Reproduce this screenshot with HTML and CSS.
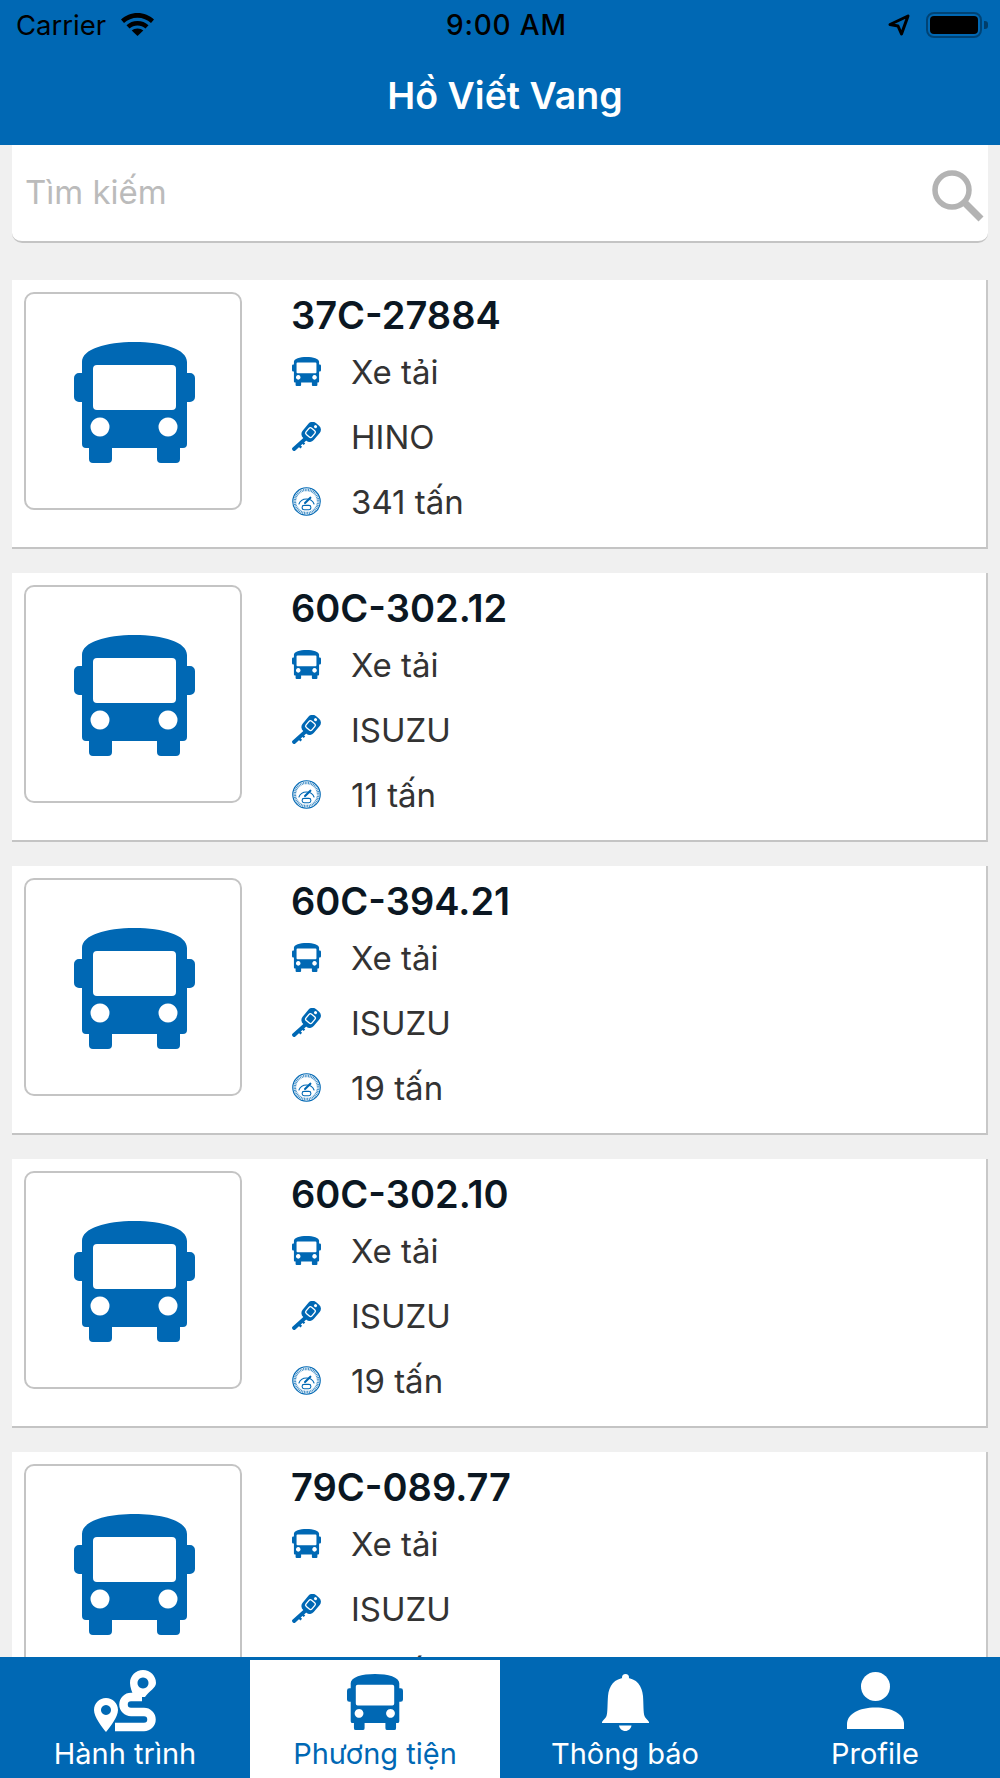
FILE: index.html
```html
<!DOCTYPE html>
<html lang="vi">
<head>
<meta charset="utf-8">
<title>Hồ Viết Vang</title>
<link rel="stylesheet" href="styles.css">
</head>
<body>
<svg class="defs" width="0" height="0" aria-hidden="true">
  <symbol id="bus" viewBox="0 0 121 121">
    <path fill-rule="evenodd" d="M8 20C8 7 32 0 60.500 0S113 7 113 20V31h3a5 5 0 0 1 5 5V55a5 5 0 0 1-5 5h-3v42a4 4 0 0 1-4 4h-3v11a4 4 0 0 1-4 4H87a4 4 0 0 1-4-4V106H38v11a4 4 0 0 1-4 4H19a4 4 0 0 1-4-4V106h-3a4 4 0 0 1-4-4V60H5a5 5 0 0 1-5-5V36a5 5 0 0 1 5-5H8ZM23 23a4 4 0 0 0-4 4V64a4 4 0 0 0 4 4H98a4 4 0 0 0 4-4V27a4 4 0 0 0-4-4ZM26 75.500a9.500 9.500 0 1 0 .01 0ZM94 75.500a9.500 9.500 0 1 0 .01 0Z"/>
  </symbol>
  <symbol id="key" viewBox="0 0 28 28">
    <path d="M2 26 12.500 16.500" fill="none" stroke="currentColor" stroke-width="3.800" stroke-linecap="round"/>
    <path d="M6.500 22.500l2.500 2.200M10 19.500l2 2" fill="none" stroke="currentColor" stroke-width="2.200"/>
    <g transform="rotate(40 18.500 9.500)">
      <rect x="11.500" y="0" width="14" height="19" rx="5"/>
      <rect x="14.800" y="6.500" width="7.400" height="8" rx="1.800" fill="none" stroke="#fff" stroke-width="1.300"/>
      <circle cx="18.500" cy="3" r="1.500" fill="#fff"/>
    </g>
  </symbol>
  <symbol id="gauge" viewBox="0 0 30 30">
    <circle cx="15" cy="15" r="14.200" fill="none" stroke="currentColor" stroke-width="1.200"/>
    <circle cx="15" cy="15" r="12" fill="none" stroke="currentColor" stroke-width="2.600" stroke-dasharray="1 .7" opacity=".75"/>
    <path d="M7 18A8.500 8.500 0 0 1 23 18" fill="none" stroke="currentColor" stroke-width="1.200"/>
    <path d="M13.500 16.500 19 11" fill="none" stroke="currentColor" stroke-width="2.200" stroke-linecap="round"/>
    <rect x="10.500" y="19" width="9" height="4.500" rx="2" fill="none" stroke="currentColor" stroke-width="1.100"/>
  </symbol>
</svg>

<header class="topbar">
  <div class="status">
    <span class="carrier">Carrier</span>
    <svg class="wifi" viewBox="0 0 33 23"><path d="M16.500 0C10 0 4.500 2.500 0 6.500L3 10c3.700-3.200 8.300-5.200 13.500-5.200S26.300 6.800 30 10l3-3.500C28.500 2.500 23 0 16.500 0Z"/><path d="M16.500 8c-4.300 0-8 1.600-11 4.200l3 3.400c2.200-1.900 5-3 8-3s5.800 1.100 8 3l3-3.400c-3-2.600-6.700-4.200-11-4.200Z"/><path d="M16.500 15.500c-2.400 0-4.300.8-5.800 2.100l5.800 5.400 5.800-5.400c-1.500-1.300-3.400-2.100-5.800-2.100Z"/></svg>
    <span class="time">9:00 AM</span>
    <svg class="locate" viewBox="0 0 22 22"><path d="M20 2 2 10.500 10 12 13.500 20Z" fill="none" stroke="#000" stroke-width="3" stroke-linejoin="round"/></svg>
    <div class="battery"><div class="battery-level"></div></div>
    <div class="battery-nub"></div>
  </div>
  <h1 class="title">Hồ Viết Vang</h1>
</header>

<div class="search">
  <span class="placeholder">Tìm kiếm</span>
  <svg class="search-icon" viewBox="0 0 52 52"><circle cx="20" cy="20" r="17" fill="none" stroke="#b3b3b3" stroke-width="5.500"/><path d="M32 32 49 49" stroke="#b3b3b3" stroke-width="7"/></svg>
</div>

<main class="list">
  <article class="card">
    <div class="thumb"><svg class="thumb-bus"><use href="#bus"/></svg></div>
    <div class="info">
      <h2 class="plate">37C-27884</h2>
      <div class="row"><svg class="ico"><use href="#bus"/></svg><span>Xe tải</span></div>
      <div class="row"><svg class="ico"><use href="#key"/></svg><span>HINO</span></div>
      <div class="row"><svg class="ico"><use href="#gauge"/></svg><span>341 tấn</span></div>
    </div>
  </article>
  <article class="card">
    <div class="thumb"><svg class="thumb-bus"><use href="#bus"/></svg></div>
    <div class="info">
      <h2 class="plate">60C-302.12</h2>
      <div class="row"><svg class="ico"><use href="#bus"/></svg><span>Xe tải</span></div>
      <div class="row"><svg class="ico"><use href="#key"/></svg><span>ISUZU</span></div>
      <div class="row"><svg class="ico"><use href="#gauge"/></svg><span>11 tấn</span></div>
    </div>
  </article>
  <article class="card">
    <div class="thumb"><svg class="thumb-bus"><use href="#bus"/></svg></div>
    <div class="info">
      <h2 class="plate">60C-394.21</h2>
      <div class="row"><svg class="ico"><use href="#bus"/></svg><span>Xe tải</span></div>
      <div class="row"><svg class="ico"><use href="#key"/></svg><span>ISUZU</span></div>
      <div class="row"><svg class="ico"><use href="#gauge"/></svg><span>19 tấn</span></div>
    </div>
  </article>
  <article class="card">
    <div class="thumb"><svg class="thumb-bus"><use href="#bus"/></svg></div>
    <div class="info">
      <h2 class="plate">60C-302.10</h2>
      <div class="row"><svg class="ico"><use href="#bus"/></svg><span>Xe tải</span></div>
      <div class="row"><svg class="ico"><use href="#key"/></svg><span>ISUZU</span></div>
      <div class="row"><svg class="ico"><use href="#gauge"/></svg><span>19 tấn</span></div>
    </div>
  </article>
  <article class="card">
    <div class="thumb"><svg class="thumb-bus"><use href="#bus"/></svg></div>
    <div class="info">
      <h2 class="plate">79C-089.77</h2>
      <div class="row"><svg class="ico"><use href="#bus"/></svg><span>Xe tải</span></div>
      <div class="row"><svg class="ico"><use href="#key"/></svg><span>ISUZU</span></div>
      <div class="row"><svg class="ico"><use href="#gauge"/></svg><span>19 tấn</span></div>
    </div>
  </article>
</main>

<nav class="tabs">
  <div class="tab">
    <svg class="tab-icon route" viewBox="0 0 62 62"><path fill-rule="evenodd" d="M12 28C5.400 28 0 33.400 0 40c0 7 8 17 12 22 4-5 12-15 12-22 0-6.600-5.400-12-12-12ZM12 35a5 5 0 1 1-.01 0Z"/><path fill-rule="evenodd" d="M49 0C41.800 0 36 5.800 36 13c0 4 2 9 4 14h11c4-6 11-9 11-14C62 5.800 56.200 0 49 0ZM49 7.500a5.500 5.500 0 1 1-.01 0Z"/><path d="M48 27H37a7.500 7.500 0 0 0 0 15H50a7.500 7.500 0 0 1 0 15H21" fill="none" stroke="#fff" stroke-width="8.500"/></svg>
    <span class="tab-label">Hành trình</span>
  </div>
  <div class="tab active">
    <svg class="tab-icon"><use href="#bus"/></svg>
    <span class="tab-label">Phương tiện</span>
  </div>
  <div class="tab">
    <svg class="tab-icon bell" viewBox="0 0 47 57"><circle cx="23.500" cy="3.500" r="3.500"/><path d="M23.500 4C12 4 7 12 6 22c-.6 8-.3 17-1.500 20C4 44 1 46 0 48v1h47v-1c-1-2-4-4-4.500-6C41.300 39 41.600 30 41 22 40 12 35 4 23.500 4Z"/><path d="M17 51.500h12.500c-.5 3-3 5.500-6.250 5.500S17.500 54.500 17 51.500Z"/></svg>
    <span class="tab-label">Thông báo</span>
  </div>
  <div class="tab">
    <svg class="tab-icon person" viewBox="0 0 57 57"><circle cx="28.500" cy="14.500" r="14.500"/><path d="M0 57V52C0 42 12 35.500 28.500 35.500S57 42 57 52V57Z"/></svg>
    <span class="tab-label">Profile</span>
  </div>
</nav>
</body>
</html>
```

FILE: styles.css
```css
* { box-sizing: border-box; }
html, body { margin: 0; padding: 0; }
body {
  position: relative;
  width: 1000px;
  height: 1778px;
  overflow: hidden;
  background: #f0f0f0;
  font-family: Inter, "Liberation Sans", sans-serif;
  color: #333;
}
.defs { position: absolute; }

.topbar { height: 145px; background: #0068b4; }
.status {
  display: flex;
  align-items: center;
  height: 50px;
  color: #000;
  font-size: 27.5px;
}
.carrier { margin-left: 16px; width: 91px; }
.wifi { width: 33px; height: 23px; margin-left: 14px; margin-top: -1px; }
.time {
  margin-left: 292px;
  width: 119px;
  font-size: 28px;
  letter-spacing: .8px;
  font-weight: 500;
  text-align: center;
  white-space: nowrap;
}
.locate { width: 22px; height: 22px; margin-left: 323px; }
.battery {
  width: 56px;
  height: 26px;
  margin-left: 16px;
  padding: 2px;
  border: 2px solid rgba(0, 0, 0, .35);
  border-radius: 8px;
}
.battery-level { height: 100%; background: #000; border-radius: 4px; }
.battery-nub {
  width: 4px;
  height: 8px;
  margin-left: 2px;
  background: rgba(0, 0, 0, .4);
  border-radius: 0 3px 3px 0;
}
.title {
  margin: 0;
  padding: 24px 0 0 10px;
  color: #fff;
  font-size: 37.5px;
  line-height: 44px;
  font-weight: 600;
  text-align: center;
}

.search {
  display: flex;
  align-items: center;
  justify-content: space-between;
  height: 98px;
  margin: 0 12px;
  padding: 0 4px 0 13px;
  background: #fff;
  border-bottom: 2px solid #c4c4c4;
  border-radius: 0 0 10px 10px;
}
.placeholder { font-size: 33px; color: #bbb; margin-top: -2px; }
.search-icon { width: 52px; height: 52px; margin-top: 5px; }

.list { display: flex; flex-direction: column; gap: 24px; margin: 37px 12px 0; }
.card {
  display: flex;
  flex: none;
  height: 269px;
  padding: 12px;
  background: #fff;
  border-bottom: 2px solid #c4c4c4;
  border-right: 2px solid #c8c8c8;
}
.thumb {
  display: flex;
  align-items: center;
  justify-content: center;
  flex: none;
  width: 218px;
  height: 218px;
  border: 2px solid #c4c4c4;
  border-radius: 10px;
}
.thumb-bus { width: 121px; height: 121px; fill: #0068b4; margin-top: 2px; margin-left: 2px; }
.info { margin-left: 49px; margin-top: -12px; }
.plate {
  margin: 0;
  height: 59px;
  color: #0b1722;
  font-size: 38px;
  line-height: 70px;
  font-weight: 600;
}
.row { display: flex; align-items: center; height: 65px; font-size: 33px; }
.ico { width: 29px; height: 29px; margin: 0 30px 0 1px; fill: #0068b4; color: #0068b4; }

.tabs {
  position: absolute;
  left: 0;
  right: 0;
  bottom: 0;
  display: flex;
  height: 121px;
  padding-top: 3px;
  background: #0068b4;
}
.tab {
  position: relative;
  display: flex;
  flex: 1;
  flex-direction: column;
  align-items: center;
  color: #fff;
  fill: #fff;
}
.tab.active { background: #fff; color: #0068b4; fill: #0068b4; }
.tab-icon { width: 56px; height: 56px; margin-top: 14px; }
.route { width: 62px; height: 62px; margin-top: 10px; }
.bell { width: 47px; height: 57px; margin-top: 14px; }
.person { width: 57px; height: 57px; margin-top: 12px; }
.tab-label { position: absolute; top: 76px; font-size: 29px; line-height: 36px; white-space: nowrap; }
```
